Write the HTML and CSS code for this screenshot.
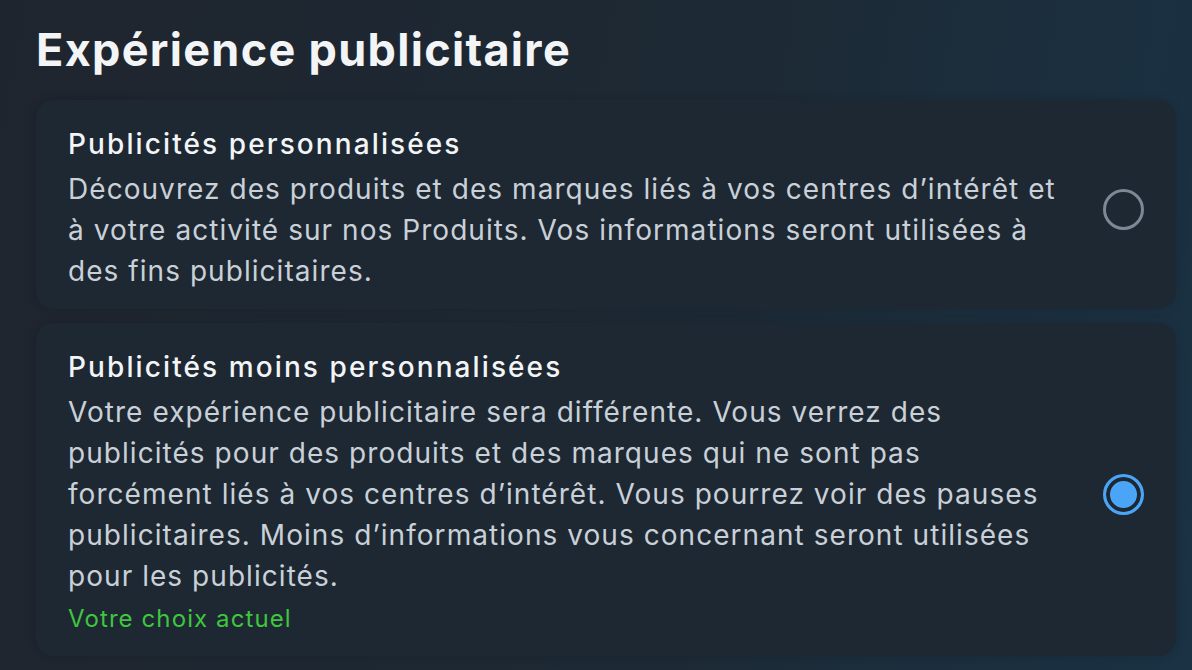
FILE: index.html
```html
<!DOCTYPE html>
<html lang="fr">
<head>
  <meta charset="UTF-8" />
  <meta name="viewport" content="width=device-width, initial-scale=1.0" />
  <title>Expérience publicitaire</title>
  <link rel="stylesheet" href="styles.css">
</head>
<body>
  <div class="page">
    <h1>Expérience publicitaire</h1>

    <div class="option">
      <div class="option-text">
        <h2>Publicités personnalisées</h2>
        <p>Découvrez des produits et des marques liés à vos centres d’intérêt et à votre activité sur nos Produits. Vos informations seront utilisées à des fins publicitaires.</p>
      </div>
      <span class="radio"></span>
    </div>

    <div class="option">
      <div class="option-text">
        <h2>Publicités moins personnalisées</h2>
        <p>Votre expérience publicitaire sera différente. Vous verrez des publicités pour des produits et des marques qui ne sont pas forcément liés à vos centres d’intérêt. Vous pourrez voir des pauses publicitaires. Moins d’informations vous concernant seront utilisées pour les publicités.</p>
        <div class="current">Votre choix actuel</div>
      </div>
      <span class="radio checked"></span>
    </div>
  </div>
</body>
</html>
```

FILE: styles.css
```css
*, *::before, *::after {
  box-sizing: border-box;
  margin: 0;
  padding: 0;
}

html, body {
  height: 100%;
}

body {
  font-family: Inter, "Noto Sans", sans-serif;
  background: linear-gradient(100deg, #1f252e 0%, #1d2934 55%, #1a3244 100%);
  color: #f2f4f6;
  overflow: hidden;
}

.page {
  padding: 23px 16px 0 36px;
}

h1 {
  font-size: 45px;
  font-weight: 700;
  line-height: 54px;
  letter-spacing: 1.3px;
  margin-bottom: 23px;
}

.option {
  display: flex;
  align-items: center;
  gap: 32px;
  background-color: #1e2832;
  border-radius: 18px;
  padding: 26px 32px 17px 32px;
  margin-bottom: 14px;
  box-shadow: 0 0 10px rgba(10, 14, 20, 0.15);
}

.option-text {
  flex: 1;
}

h2 {
  font-size: 28px;
  font-weight: 500;
  line-height: 36px;
  letter-spacing: 2.1px;
  margin-bottom: 7px;
}

p {
  font-size: 28px;
  line-height: 41px;
  letter-spacing: 1.05px;
  color: #c9d0d8;
}

.current {
  font-size: 24px;
  line-height: 40px;
  letter-spacing: 1.1px;
  color: #3fc63f;
  margin-top: 2px;
}

.radio {
  flex: none;
  width: 41px;
  height: 41px;
  border-radius: 50%;
  border: 3px solid #7c8895;
}

.radio.checked {
  border-color: #4aa5f7;
  background-color: #4aa5f7;
  box-shadow: inset 0 0 0 4px #1e2832;
}
```
